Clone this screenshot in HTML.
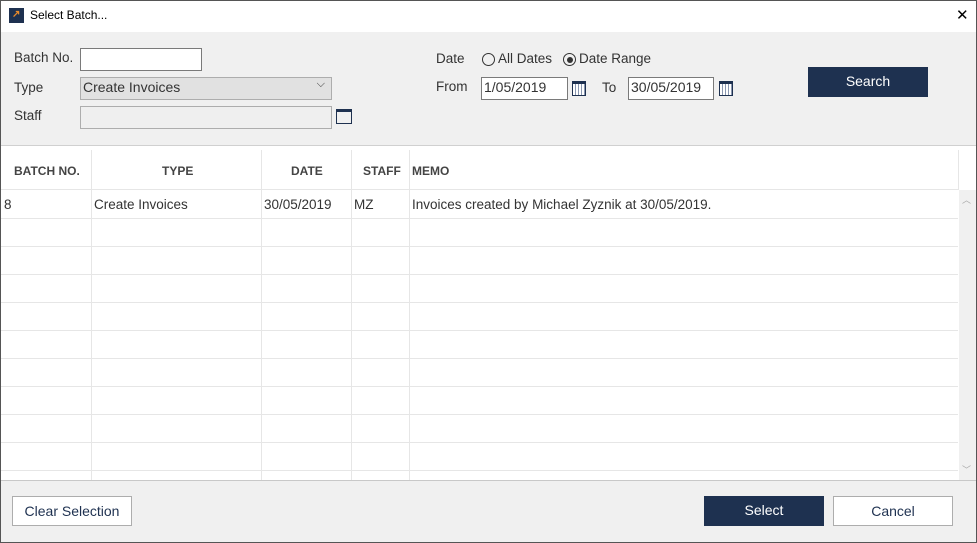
<!DOCTYPE html><html><head><style>
body{margin:0;width:977px;height:543px;overflow:hidden;font-family:"Segoe UI","Liberation Sans",sans-serif;font-size:13.5px;color:#333;position:relative;}
.win{position:absolute;left:0;top:0;width:977px;height:543px;background:#f0f0f0;}
.bd{position:absolute;left:0;top:0;width:977px;height:543px;box-sizing:border-box;border:1px solid #555;}
.a{position:absolute;}
.tb{left:0;top:0;width:977px;height:32px;background:#fff;}
.in{background:#fff;border:1px solid #7a7a7a;box-sizing:border-box;height:23px;padding:1px 2px;font-size:14px;}
.btn{box-sizing:border-box;text-align:center;line-height:28px;font-size:14px;}
.hl{position:absolute;left:0;width:958px;height:1px;background:#e6e6e6;}
.vl{position:absolute;top:150px;width:1px;height:330px;background:#e6e6e6;}
.th{position:absolute;top:164px;font-size:12px;font-weight:bold;color:#444;}
.td{position:absolute;top:197px;font-size:13.5px;}
</style></head><body><div class="win">
<div class="a tb"></div>
<div class="a" style="left:9px;top:8px;width:15px;height:15px;background:#1e3150"></div>
<div class="a" style="left:12px;top:9px;color:#e88a2a;font-size:10px;font-weight:bold">↗</div>
<div class="a" style="left:30px;top:8px;font-size:12px;color:#000">Select Batch...</div>
<div class="a" style="left:956px;top:6px;font-size:15px;color:#000">✕</div>
<div class="a" style="left:14px;top:50px">Batch No.</div>
<div class="a in" style="left:80px;top:48px;width:122px"></div>
<div class="a" style="left:14px;top:80px">Type</div>
<div class="a in" style="left:80px;top:77px;width:252px;background:#e1e1e1;border-color:#adadad">Create Invoices<span style="position:absolute;right:6px;top:0;font-size:11px">⌵</span></div>
<div class="a" style="left:14px;top:108px">Staff</div>
<div class="a in" style="left:80px;top:106px;width:252px;background:#efefef;border-color:#adadad"></div>
<div class="a" style="left:336px;top:109px;width:16px;height:15px;border:1.5px solid #1e3150;border-top-width:3px;box-sizing:border-box"></div>
<div class="a" style="left:436px;top:51px">Date</div>
<div class="a" style="left:482px;top:53px;width:11px;height:11px;border:1px solid #333;border-radius:50%"></div>
<div class="a" style="left:498px;top:51px">All Dates</div>
<div class="a" style="left:563px;top:53px;width:11px;height:11px;border:1px solid #333;border-radius:50%"></div>
<div class="a" style="left:566.5px;top:56.5px;width:6px;height:6px;background:#333;border-radius:50%"></div>
<div class="a" style="left:579px;top:51px">Date Range</div>
<div class="a" style="left:436px;top:79px">From</div>
<div class="a in" style="left:481px;top:77px;width:87px">1/05/2019</div>
<div class="a" style="left:572px;top:81px;width:14px;height:15px;border:1px solid #1e3150;border-top-width:3px;box-sizing:border-box;background:repeating-linear-gradient(90deg,#fff 0 2px,#8a97b0 2px 3px)"></div>
<div class="a" style="left:602px;top:80px">To</div>
<div class="a in" style="left:628px;top:77px;width:86px">30/05/2019</div>
<div class="a" style="left:719px;top:81px;width:14px;height:15px;border:1px solid #1e3150;border-top-width:3px;box-sizing:border-box;background:repeating-linear-gradient(90deg,#fff 0 2px,#8a97b0 2px 3px)"></div>
<div class="a btn" style="left:808px;top:67px;width:120px;height:30px;background:#1e3150;color:#fff">Search</div>
<div class="a" style="left:0;top:145px;width:977px;height:335px;background:#fff;border-top:1px solid #d0d0d0"></div>
<div class="hl" style="top:189px"></div>
<div class="hl" style="top:218px"></div><div class="hl" style="top:246px"></div><div class="hl" style="top:274px"></div><div class="hl" style="top:302px"></div><div class="hl" style="top:330px"></div><div class="hl" style="top:358px"></div><div class="hl" style="top:386px"></div><div class="hl" style="top:414px"></div><div class="hl" style="top:442px"></div><div class="hl" style="top:470px"></div>
<div class="vl" style="left:91px"></div><div class="vl" style="left:261px"></div><div class="vl" style="left:351px"></div><div class="vl" style="left:409px"></div><div class="vl" style="left:958px;height:40px"></div>
<div class="a" style="left:959px;top:190px;width:17px;height:290px;background:#f0f0f0"></div>
<div class="a" style="left:962px;top:193px;font-size:9px;color:#aaa">︿</div>
<div class="a" style="left:962px;top:463px;font-size:9px;color:#aaa">﹀</div>
<div class="a" style="left:0;top:480px;width:977px;height:1px;background:#c8c8c8"></div>
<div class="th" style="left:14px">BATCH NO.</div><div class="th" style="left:162px">TYPE</div><div class="th" style="left:291px">DATE</div><div class="th" style="left:363px">STAFF</div><div class="th" style="left:412px">MEMO</div>
<div class="td" style="left:4px">8</div><div class="td" style="left:94px">Create Invoices</div><div class="td" style="left:264px">30/05/2019</div><div class="td" style="left:354px">MZ</div><div class="td" style="left:412px">Invoices created by Michael Zyznik at 30/05/2019.</div>
<div class="a btn" style="left:12px;top:496px;width:120px;height:30px;background:#fff;border:1px solid #adadad;color:#1e3150">Clear Selection</div>
<div class="a btn" style="left:704px;top:496px;width:120px;height:30px;background:#1e3150;color:#fff">Select</div>
<div class="a btn" style="left:833px;top:496px;width:120px;height:30px;background:#fff;border:1px solid #adadad;color:#1e3150">Cancel</div>
</div><div class="bd"></div></body></html>
